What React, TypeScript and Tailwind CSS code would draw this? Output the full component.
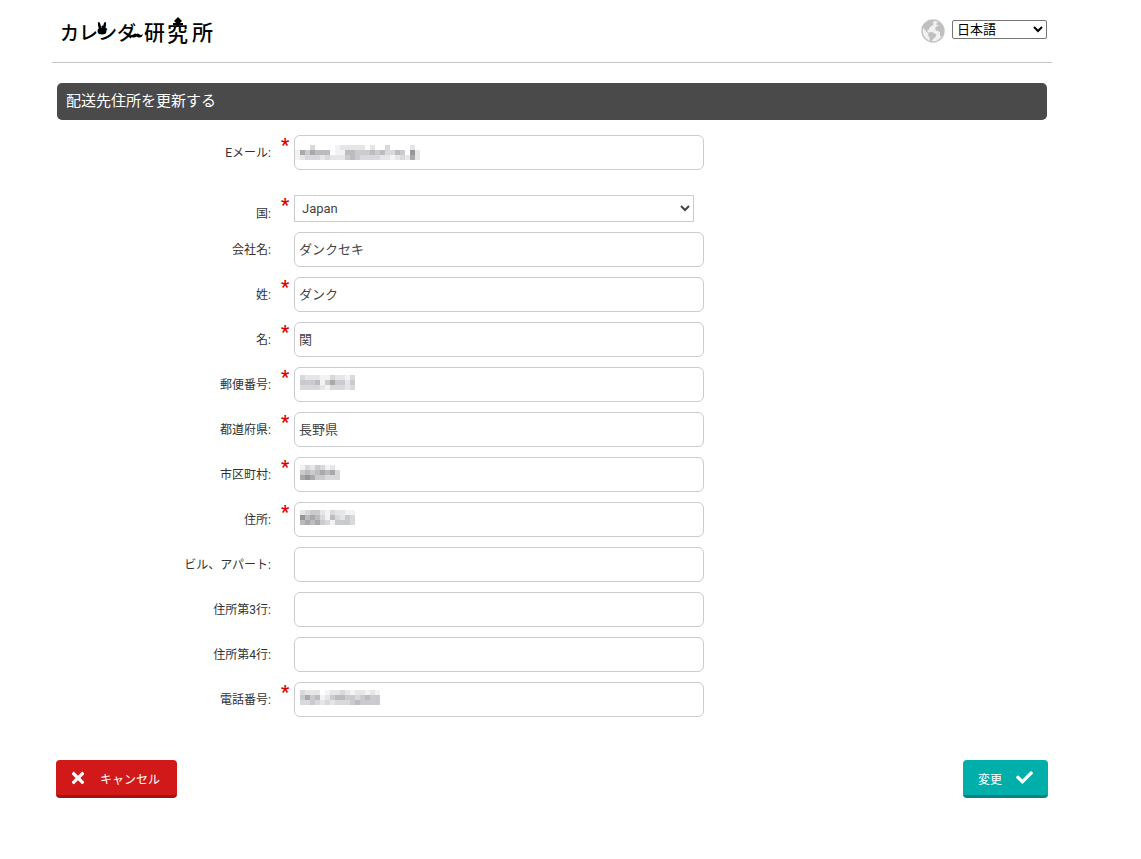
import React, { useState } from 'react';
import { FaCheck, FaTimes } from 'react-icons/fa';

type Field = {
  id: string;
  label: string;
  required?: boolean;
  value?: string;
  masked?: string[];
};

// Each digit is one block of a masked value, 0 = white ... 9 = dark
const EMAIL_MASK = [
  '0003000012222202003000020',
  '1646555011554445453354072',
  '1233323222454333322123262',
];

const FIELDS: Field[] = [
  { id: 'company', label: '会社名:', value: 'ダンクセキ' },
  { id: 'lastName', label: '姓:', required: true, value: 'ダンク' },
  { id: 'firstName', label: '名:', required: true, value: '関' },
  { id: 'zip', label: '郵便番号:', required: true, masked: ['32221132213', '44451464424', '33332133323'] },
  { id: 'prefecture', label: '都道府県:', required: true, value: '長野県' },
  { id: 'city', label: '市区町村:', required: true, masked: ['13243120', '45456563', '67644333'] },
  { id: 'address', label: '住所:', required: true, masked: ['23442132211', '75653153243', '56564314443'] },
  { id: 'building', label: 'ビル、アパート:' },
  { id: 'address3', label: '住所第3行:' },
  { id: 'address4', label: '住所第4行:' },
  { id: 'phone', label: '電話番号:', required: true, masked: ['3222012232122121', '4645124554434544', '3343232333454444'] },
];

const SHADES = ['#ffffff', '#f3f3f3', '#e6e6e8', '#d8d9dc', '#cacbce', '#bcbcbf', '#a9a9ac', '#969698', '#858587', '#757577'];

function Mask({ rows, className }: { rows: string[]; className: string }) {
  return (
    <svg
      width={rows[0].length * 5}
      height={rows.length * 5}
      shapeRendering="crispEdges"
      aria-hidden="true"
      className={`pointer-events-none absolute ${className}`}
    >
      {rows.map((row, y) =>
        row.split('').map((c, x) => (
          <rect key={`${x}-${y}`} x={x * 5} y={y * 5} width="5" height="5" fill={SHADES[Number(c)]} />
        ))
      )}
    </svg>
  );
}

function Logo() {
  return (
    <svg width="156" height="32" viewBox="0 0 156 32" role="img" aria-label="カレンダー研究所">
      <g fill="#000" fontSize="21" fontWeight="500" fontFamily="'Noto Sans CJK JP', sans-serif">
        <text x="0" y="25" fontSize="19">カ</text>
        <text x="19" y="25" fontSize="19">レ</text>
        <text x="38" y="25" fontSize="19">ン</text>
        <text x="57" y="25" fontSize="19">ダ</text>
        <text x="84" y="25">研</text>
        <text x="107" y="26">究</text>
        <text x="132" y="25">所</text>
      </g>
      {/* rabbit */}
      <ellipse cx="39.500" cy="11" rx="1.300" ry="4" transform="rotate(-12 39.500 11)" />
      <ellipse cx="44.500" cy="11" rx="1.300" ry="4" transform="rotate(12 44.500 11)" />
      <ellipse cx="42" cy="16" rx="4.500" ry="3.500" />
      {/* moustache */}
      <path d="M70 19q2 2 4 0q1.500-1 2.500 0q1-1 2.500 0q2 2 4 0q-1 4-4 3.500q-1.500 0-2.500-1q-1 1-2.500 1q-3 .5-4-3.500z" />
      {/* hat */}
      <path d="M118 2l4 4l-2 2h3v2h-10v-2h3l-2-2z" />
    </svg>
  );
}

function Globe() {
  return (
    <svg width="24" height="24" viewBox="0 0 24 24" aria-hidden="true">
      <circle cx="12" cy="12" r="11" fill="#f1f1f1" stroke="#c4c4c4" strokeWidth="1.500" />
      <g fill="#bfbfbf">
        <path d="M4 4.500Q8 1 12 1l1 1.500l-1.500 1l1.500 1.500l-2.500 2l-2 1.500l-.5 2l-2 .5l1 2l2 1.500l-1.500 0l-3-2.500l-2-3.500l-2.500 0Q2 6.500 4 4.500z" />
        <path d="M8 13.500l3-.5l2.500 1.500l2 1l-1.500 3l-2 1.500l-1.500 3l-1.500-.5l-.5-4l-1.500-2z" />
        <path d="M15 5.500l1-2l3 .5q3 2.500 4 6.500l-1 5l-2 2.500l-1-1.500l0-3l-1.500-1.500l-2.500-.5l-1-2.500l1.500-1.500l2-.5l-.5-1z" />
      </g>
    </svg>
  );
}

function Label({ id, text, required }: { id: string; text: string; required?: boolean }) {
  return (
    <>
      <label htmlFor={id} className="w-[219px] shrink-0 text-right text-xs text-[#333]">
        {text}
      </label>
      <span className="w-[23px] shrink-0 self-start pl-[10px] text-lg font-bold leading-5 text-[#e00000]">
        {required && '*'}
      </span>
    </>
  );
}

function TextRow({ field, maskClass = 'left-[6px] top-2' }: { field: Field; maskClass?: string }) {
  const [value, setValue] = useState(field.value ?? '');

  return (
    <div className="flex items-center">
      <Label id={field.id} text={field.label} required={field.required} />
      <div className="relative min-w-0 max-w-[410px] flex-1">
        <input
          id={field.id}
          type="text"
          value={value}
          onChange={(e) => setValue(e.target.value)}
          className="block h-[35px] w-full rounded-md border border-[#ccc] bg-white px-1 pb-[2px] text-[13px] text-[#444]"
        />
        {field.masked && <Mask rows={field.masked} className={maskClass} />}
      </div>
    </div>
  );
}

export default function App() {
  return (
    <div className="pl-[52px] pr-[89px] font-[Roboto,'Noto_Sans_CJK_JP',sans-serif]">
      <div className="max-w-[1000px]">
        <header className="flex h-[63px] items-center justify-between border-b border-[#c4c4c4] pl-2 pr-[5px]">
          <a href="#">
            <Logo />
          </a>
          <div className="flex items-start gap-[7px]">
            <Globe />
            <select
              aria-label="言語"
              className="mt-px h-[19px] w-[95px] rounded-xs border border-[#767676] bg-white text-[13px] text-black"
            >
              <option>日本語</option>
              <option>English</option>
            </select>
          </div>
        </header>

        <form className="mt-5 px-[5px]" onSubmit={(e) => e.preventDefault()}>
          <h1 className="rounded-[5px] bg-[#4a4a4a] px-[9px] text-[15px] leading-[37px] text-white">
            配送先住所を更新する
          </h1>

          <div className="-ml-[5px] mt-[15px] flex flex-col gap-[10px]">
            <TextRow
              field={{ id: 'email', label: 'Eメール:', required: true, masked: EMAIL_MASK }}
              maskClass="left-px top-[10px]"
            />
            <div className="mt-[15px] flex items-end">
              <Label id="country" text="国:" required />
              <select
                id="country"
                className="h-[27px] min-w-0 max-w-[400px] flex-1 border border-[#ccc] bg-white px-[3px] text-[13px] text-[#444]"
              >
                <option>Japan</option>
              </select>
            </div>
            {FIELDS.map((field) => (
              <TextRow key={field.id} field={field} />
            ))}
          </div>

          <div className="-mx-px mt-[43px] flex justify-between">
            <button
              type="button"
              className="flex h-[38px] items-center rounded-[4px] border-b-[3px] border-[#a31212] bg-[#d11919] pl-[15px] pr-[17px] text-xs text-white"
            >
              <FaTimes className="mr-[15px] h-[18px] w-[14px]" />
              <span className="pt-1">キャンセル</span>
            </button>
            <button
              type="submit"
              className="flex h-[38px] items-center rounded-[4px] border-b-[3px] border-[#008782] bg-[#00afa9] px-[15px] text-xs text-white"
            >
              <span className="pt-1">変更</span>
              <FaCheck className="ml-[14px] size-[17px]" />
            </button>
          </div>
        </form>
      </div>
    </div>
  );
}
